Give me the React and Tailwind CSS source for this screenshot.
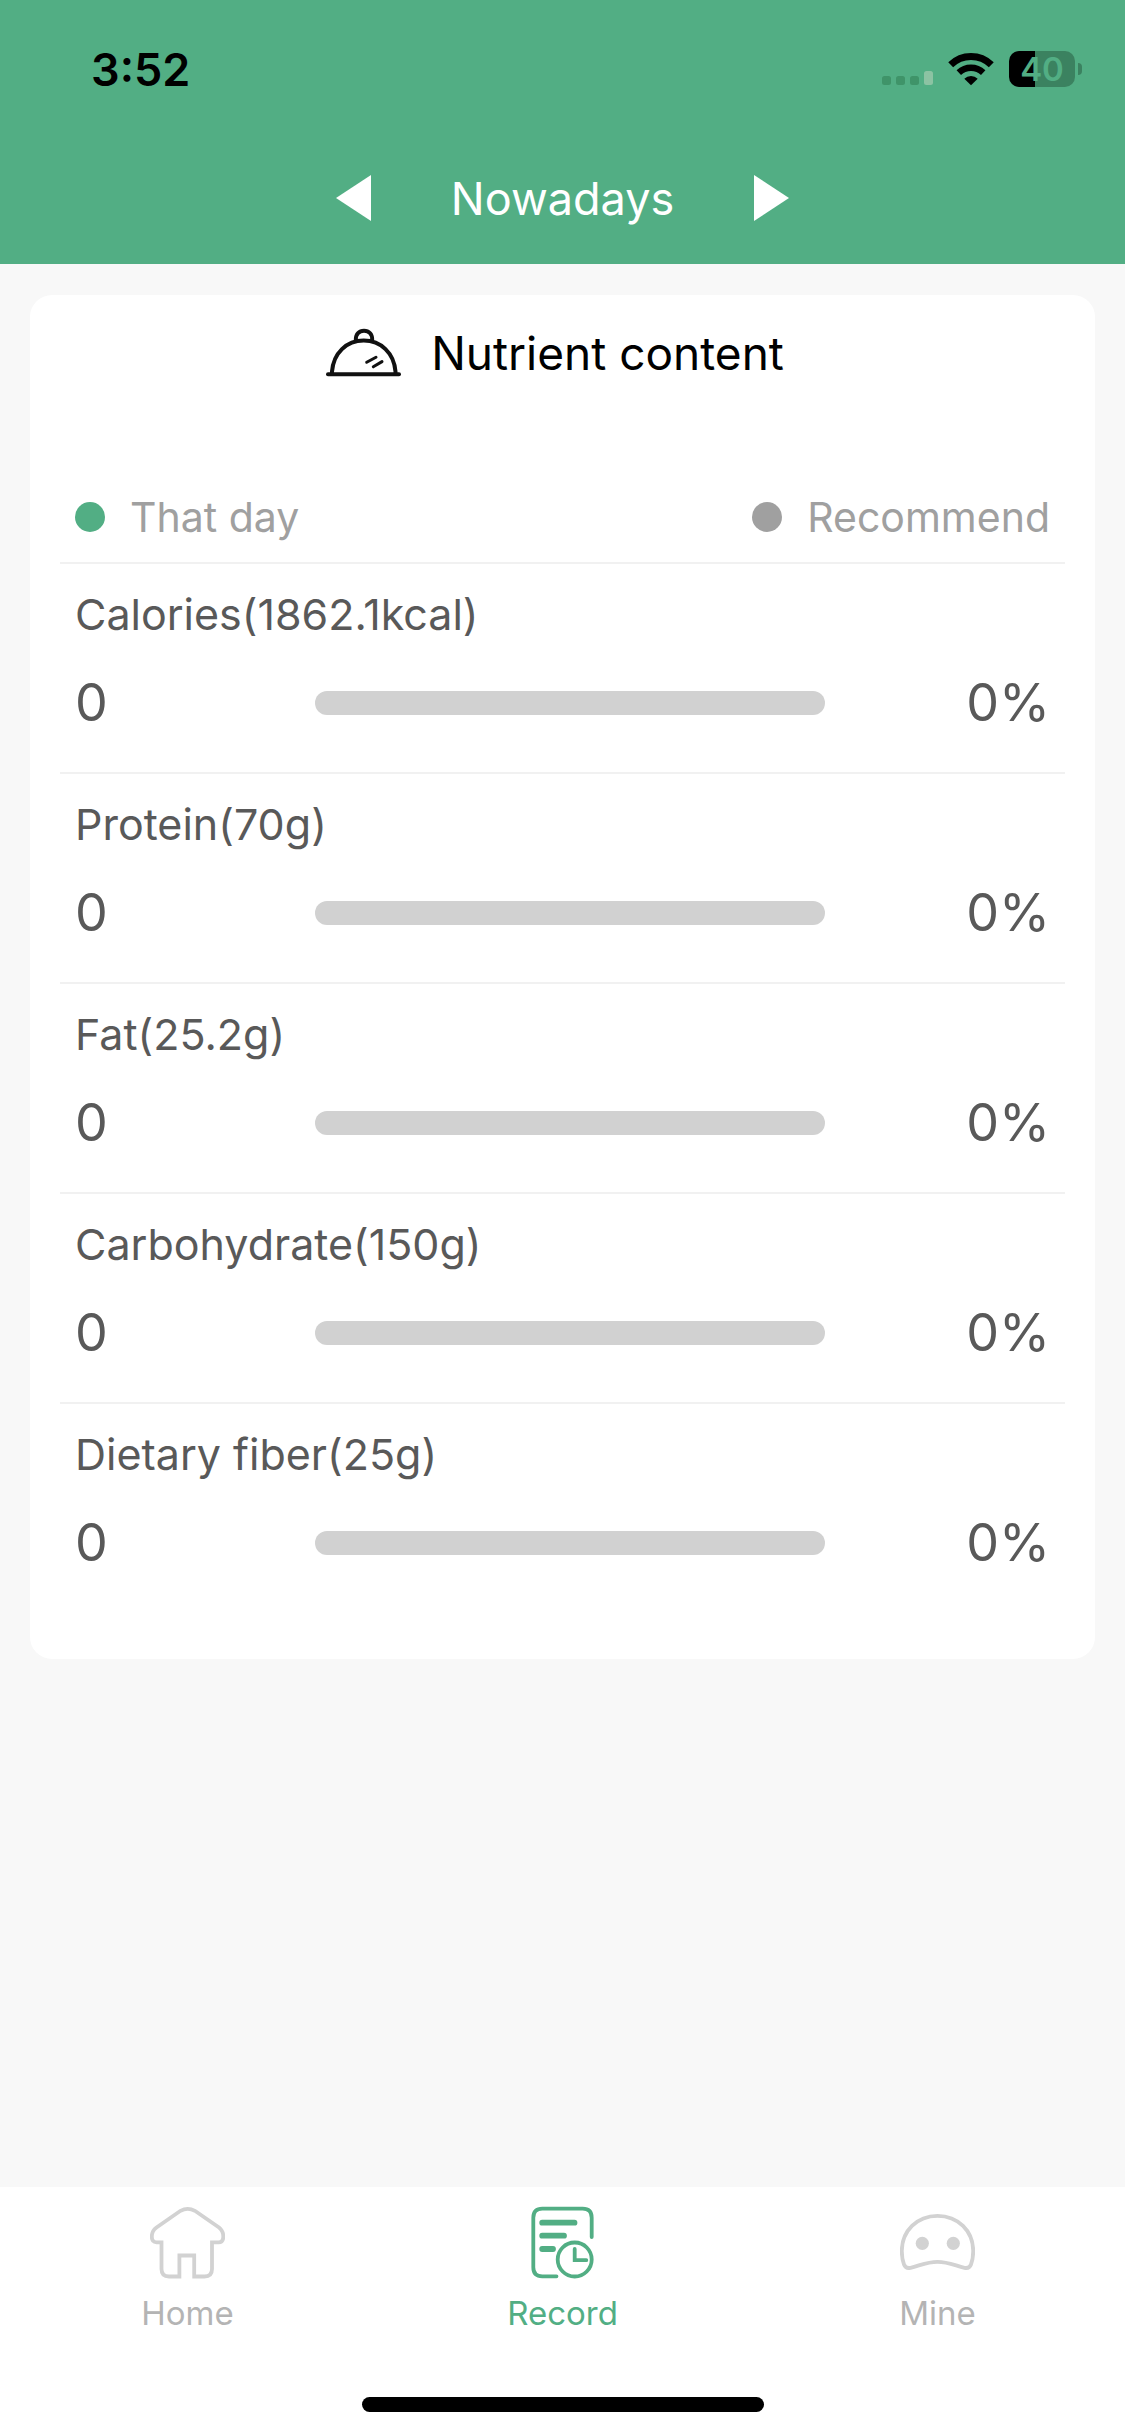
import { useState } from "react"

const nutrients = [
  { name: "Calories", target: "1862.1kcal", value: 0, percent: 0 },
  { name: "Protein", target: "70g", value: 0, percent: 0 },
  { name: "Fat", target: "25.2g", value: 0, percent: 0 },
  { name: "Carbohydrate", target: "150g", value: 0, percent: 0 },
  { name: "Dietary fiber", target: "25g", value: 0, percent: 0 },
]

const HomeIcon = () => (
  <svg viewBox="0 0 75 75" className="size-[75px]" fill="none" stroke="#d2d2d2" strokeWidth="3.8">
    <path d="M30.5 5.8Q37.7 1.8 44.9 5.8L69 22.5Q73.3 26 73.3 31.5Q73.3 37.3 68.5 37.3H62V64Q62 71.5 54.5 71.5H44.2V50.5H29.4V71.5H19Q11.5 71.5 11.5 64V37.3H6.5Q1.8 37.3 1.8 31.5Q1.8 26 6.5 22.5Z" />
  </svg>
)

const RecordIcon = () => (
  <svg viewBox="0 0 75 75" className="size-[75px]" fill="none" stroke="#52ae84" strokeWidth="3.8" strokeLinecap="round" strokeLinejoin="round">
    <path d="M66.7 32V12.7Q66.7 3.7 57.7 3.7H17.3Q8.3 3.7 8.3 12.7V62.3Q8.3 71.3 17.3 71.3H31.5" />
    <path d="M17.2 17.7H49.5M17.2 30.7H39M17.2 44H28" strokeWidth="5.8" />
    <circle cx="49.7" cy="54.5" r="17" />
    <path d="M49.7 44V55.2H61.3" strokeLinejoin="miter" />
  </svg>
)

const MineIcon = () => (
  <svg viewBox="0 0 75 75" className="size-[75px]" fill="none" stroke="#d2d2d2" strokeWidth="3.8">
    <path d="M1.8 46C1.8 26 17 10.8 37.5 10.8S73.2 26 73.2 46C73.2 51 72.5 55.5 71 59.5Q69.3 63.8 64.5 62.8C55 60.5 48 56.8 37.5 56.8S20 60.5 10.5 62.8Q5.7 63.8 4 59.5C2.5 55.5 1.8 51 1.8 46Z" />
    <circle cx="22.3" cy="38.3" r="6.6" fill="#d2d2d2" stroke="none" />
    <circle cx="53.3" cy="38.3" r="6.6" fill="#d2d2d2" stroke="none" />
  </svg>
)

const tabs = [
  { name: "Home", Icon: HomeIcon },
  { name: "Record", Icon: RecordIcon },
  { name: "Mine", Icon: MineIcon },
]

const StatusBar = () => (
  <div className="flex h-[132px] items-center justify-between pt-[6px] pr-[43px] pl-[91px]">
    <span className="text-[45px] leading-none font-semibold text-black">3:52</span>
    <div className="flex items-center gap-[15px]">
      <svg viewBox="0 0 51 36" className="h-[36px] w-[51px]">
        <g fill="#3f9469">
          <rect x="0" y="25" width="9" height="9" rx="2.5" />
          <rect x="14" y="25" width="9" height="9" rx="2.5" />
          <rect x="28" y="25" width="9" height="9" rx="2.5" />
        </g>
        <rect x="42" y="20" width="9" height="14" rx="2.5" fill="#8cc3a3" />
      </svg>
      <svg viewBox="0 0 46 36" className="h-[36px] w-[46px]" fill="none" stroke="#000" strokeWidth="7">
        <path d="M2.7 13.7A29 29 0 0 1 43.3 13.7" />
        <path d="M10.8 21.6A17.6 17.6 0 0 1 35.2 21.6" strokeWidth="6.4" />
        <path d="M23 34.3L16.3 27.7A9.6 9.6 0 0 1 29.7 27.7Z" fill="#000" stroke="none" />
      </svg>
      <div className="flex items-center gap-[3px]">
        <div className="flex h-[36px] w-[66px] items-center justify-center rounded-[10px] bg-linear-to-r from-black from-40% to-[#3b8260] to-40% text-[33px] leading-none font-semibold text-[#52ae84]">
          40
        </div>
        <div className="h-[12px] w-[4px] rounded-r-full bg-[#3b8260]"></div>
      </div>
    </div>
  </div>
)

const NutrientRow = ({ item }) => (
  <li className="border-t-2 border-[#f1f1f1] px-[15px] pb-[30px] text-[#595959]">
    <h2 className="pt-[20px] pb-[20px] text-[43px] leading-[60px]">{item.name}({item.target})</h2>
    <div className="grid h-[78px] grid-cols-[240fr_510fr_225fr] items-center text-[52px] leading-none">
      <span>{item.value}</span>
      <div role="progressbar" aria-label={item.name} aria-valuenow={item.percent} className="h-[24px] overflow-hidden rounded-full bg-[#d1d1d1]">
        <div className="h-full bg-[#52ae84]" style={{ width: `${item.percent}%` }}></div>
      </div>
      <span className="text-right">{item.percent}%</span>
    </div>
  </li>
)

const App = () => {
  const [activeTab, setActiveTab] = useState("Record")

  return (
    <div className="flex min-h-screen flex-col bg-[#f8f8f8] font-['Inter',sans-serif]">
      <header className="bg-[#52ae84]">
        <StatusBar />
        <div className="flex h-[132px] items-center justify-center gap-[80px] text-white">
          <button type="button" aria-label="Previous day">
            <svg viewBox="0 0 35 46" className="h-[46px] w-[35px]" fill="currentColor">
              <path d="M35 0V46L0 23Z" />
            </svg>
          </button>
          <h1 className="text-[45px] leading-none">Nowadays</h1>
          <button type="button" aria-label="Next day">
            <svg viewBox="0 0 35 46" className="h-[46px] w-[35px]" fill="currentColor">
              <path d="M0 0V46L35 23Z" />
            </svg>
          </button>
        </div>
      </header>

      <main className="flex-1 px-[30px] pt-[31px]">
        <section className="rounded-[22px] bg-white px-[30px] pb-[47px]">
          {/* Title */}
          <div className="flex h-[116px] items-center justify-center gap-[30px] pr-[15px]">
            <svg viewBox="0 0 75 50" className="h-[50px] w-[75px]" fill="none" stroke="#111" strokeWidth="4" strokeLinecap="round">
              <path d="M2 46.3H73" />
              <path d="M6 46V43.5C7.5 25 20.5 12.5 37.7 12.5S68 25 69.5 43.5V46" />
              <path d="M29.8 11.5C29.8 6 33 2.8 38 2.8S46.2 6 46.2 11.5" />
              <path d="M40.7 34.3L50 29.3M47.3 38.8L56 33.6" strokeWidth="3" />
            </svg>
            <span className="text-[46px] leading-none text-black">Nutrient content</span>
          </div>

          {/* Legend */}
          <div className="mt-[61px] flex h-[90px] items-center justify-between px-[15px] text-[41px] leading-none text-[#a0a0a0]">
            <div className="flex items-center gap-[25px]">
              <span className="size-[30px] rounded-full bg-[#52ae84]"></span>
              That day
            </div>
            <div className="flex items-center gap-[25px]">
              <span className="size-[30px] rounded-full bg-[#a0a0a0]"></span>
              Recommend
            </div>
          </div>

          <ul>
            {nutrients.map((item) => (
              <NutrientRow key={item.name} item={item} />
            ))}
          </ul>
        </section>
      </main>

      <footer className="bg-white">
        <nav className="grid grid-cols-3 pt-[18px]">
          {tabs.map(({ name, Icon }) => (
            <button
              key={name}
              type="button"
              onClick={() => setActiveTab(name)}
              className={`flex flex-col items-center gap-[13px] text-[33px] leading-[40px] ${activeTab === name ? "text-[#52ae84]" : "text-[#b4b4b4]"}`}
            >
              <Icon />
              {name}
            </button>
          ))}
        </nav>
        <div className="flex justify-center pt-[64px] pb-[24px]">
          <div className="h-[15px] w-[402px] rounded-full bg-black"></div>
        </div>
      </footer>
    </div>
  )
}

export default App
